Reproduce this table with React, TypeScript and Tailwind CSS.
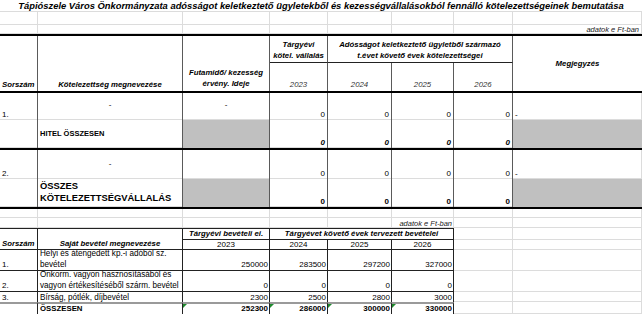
import React from "react";

const ROW = [
  "",
  "row-start-1",
  "row-start-2",
  "row-start-3",
  "row-start-4",
  "row-start-5",
  "row-start-6",
  "row-start-7",
  "row-start-8",
  "row-start-9",
  "row-start-10",
  "row-start-11",
  "row-start-12",
  "row-start-13",
  "row-start-14",
  "row-start-15",
  "row-start-16",
  "row-start-17",
  "row-start-18",
  "row-start-19",
  "row-start-20",
  "row-start-21",
];
const COL = [
  "",
  "col-start-1",
  "col-start-2",
  "col-start-3",
  "col-start-4",
  "col-start-5",
  "col-start-6",
  "col-start-7",
  "col-start-8",
];
const BLACK_ROWS = [4, 7, 10, 13];

function Cell({ className, children }: { className: string; children?: React.ReactNode }) {
  return <div className={"relative flex overflow-hidden " + className}>{children}</div>;
}

function Tri() {
  return (
    <span className="absolute left-0 top-0 h-0 w-0 border-t-[4px] border-r-[4px] border-t-[#1f8a2e] border-r-transparent" />
  );
}

export default function App() {
  const bg: React.ReactNode[] = [];
  for (let r = 1; r <= 21; r++) {
    if (BLACK_ROWS.includes(r)) continue;
    for (let c = 1; c <= 8; c++) {
      bg.push(
        <div key={`g-${r}-${c}`} className={`${ROW[r]} ${COL[c]} border-r border-b border-[#dcdcdc]`} />
      );
    }
  }

  const upperNumCols = [4, 5, 6, 7];

  return (
    <div className="w-[642px] h-[314px] overflow-hidden bg-white text-black font-['Liberation_Sans',Arial,sans-serif]">
      <div className="grid grid-cols-[38px_145px_87px_58px_64px_62px_59px_129px] grid-rows-[12px_13px_9px_2px_27px_28px_2px_27px_28px_2px_29px_28px_2px_9px_10px_12px_10px_21px_21px_10px_12px]">
        {bg}

        {/* Title */}
        <Cell className="row-start-1 col-start-1 col-span-8 bg-white border-b border-[#dcdcdc] items-center justify-center">
          <span className="text-[9.4px] font-bold italic leading-none whitespace-nowrap">
            Tápiószele Város Önkormányzata adósságot keletkeztető ügyletekből és kezességvállalásokból fennálló kötelezettségeinek bemutatása
          </span>
        </Cell>

        <Cell className="row-start-3 col-start-8 items-end justify-end pr-[3px]">
          <span className="text-[7.5px] italic leading-[9px] text-[#222]">adatok e Ft-ban</span>
        </Cell>

        <div className="row-start-4 col-start-1 col-span-8 bg-black" />

        {/* Header */}
        <Cell className="row-start-5 row-span-2 col-start-1 bg-white border-r border-[#5a5a5a] items-end pl-[2px] pb-[1px]">
          <span className="text-[7.8px] font-bold italic leading-[10px]">Sorszám</span>
        </Cell>
        <Cell className="row-start-5 row-span-2 col-start-2 bg-white border-r border-[#5a5a5a] items-end justify-center pb-[1px]">
          <span className="text-[7.8px] font-bold italic leading-[10px]">Kötelezettség megnevezése</span>
        </Cell>
        <Cell className="row-start-5 row-span-2 col-start-3 bg-white border-r border-[#5a5a5a] items-end justify-center pb-[2px]">
          <span className="text-[7.8px] font-bold italic leading-[11px] text-center">
            Futamidő/ kezesség
            <br />
            érvény. Ideje
          </span>
        </Cell>
        <Cell className="row-start-5 col-start-4 bg-white border-r border-b border-r-[#5a5a5a] border-b-[#222] items-end justify-center pb-[1px]">
          <span className="text-[7.8px] font-bold italic leading-[10.5px] text-center whitespace-nowrap">
            Tárgyévi
            <br />
            kötel. vállalás
          </span>
        </Cell>
        <Cell className="row-start-5 col-start-5 col-span-3 bg-white border-r border-b border-r-[#5a5a5a] border-b-[#222] items-end justify-center pb-[1px]">
          <span className="text-[7.8px] font-bold italic leading-[10.5px] text-center whitespace-nowrap">
            Adósságot keletkeztető ügyletből származó
            <br />
            t.évet követő évek kötelezettségei
          </span>
        </Cell>
        {[
          ["col-start-4", "2023"],
          ["col-start-5", "2024"],
          ["col-start-6", "2025"],
          ["col-start-7", "2026"],
        ].map(([c, y]) => (
          <Cell key={y} className={`row-start-6 ${c} bg-white border-r border-[#5a5a5a] items-end justify-center pb-[1px]`}>
            <span className="text-[7.8px] italic leading-[10px] text-[#333]">{y}</span>
          </Cell>
        ))}
        <Cell className="row-start-5 row-span-2 col-start-8 bg-white items-center justify-center">
          <span className="text-[7.8px] font-bold italic leading-[10px]">Megjegyzés</span>
        </Cell>

        <div className="row-start-7 col-start-1 col-span-8 bg-black" />

        {/* Row 1. */}
        <Cell className="row-start-8 col-start-1 border-r border-r-[#5a5a5a] items-end pl-[2px]">
          <span className="text-[8px] leading-[10px]">1.</span>
        </Cell>
        <Cell className="row-start-8 col-start-2 border-r border-r-[#5a5a5a] items-center justify-center pb-[3px]">
          <span className="text-[8px] leading-[10px]">-</span>
        </Cell>
        <Cell className="row-start-8 col-start-3 border-r border-r-[#5a5a5a] items-center justify-center pb-[3px]">
          <span className="text-[8px] leading-[10px]">-</span>
        </Cell>
        {upperNumCols.map((c) => (
          <Cell key={`r8-${c}`} className={`row-start-8 ${COL[c]} border-r border-r-[#5a5a5a] items-end justify-end pr-[2px]`}>
            <span className="text-[8px] leading-[10px]">0</span>
          </Cell>
        ))}
        <Cell className="row-start-8 col-start-8 items-end pl-[2px]">
          <span className="text-[8px] leading-[10px]">-</span>
        </Cell>

        {/* HITEL ÖSSZESEN */}
        <Cell className="row-start-9 col-start-1 border-r border-r-[#5a5a5a]" />
        <Cell className="row-start-9 col-start-2 border-r border-r-[#5a5a5a] items-center pl-[2px]">
          <span className="text-[7.5px] font-bold leading-[10px]">HITEL ÖSSZESEN</span>
        </Cell>
        <Cell className="row-start-9 col-start-3 bg-[#c0c0c0] border-r border-r-[#5a5a5a]" />
        {upperNumCols.map((c) => (
          <Cell key={`r9-${c}`} className={`row-start-9 ${COL[c]} border-r border-r-[#5a5a5a] items-end justify-end pr-[2px]`}>
            <span className="text-[8px] font-bold italic leading-[10px]">0</span>
          </Cell>
        ))}
        <Cell className="row-start-9 col-start-8 bg-[#c0c0c0]" />

        <div className="row-start-10 col-start-1 col-span-8 bg-black" />

        {/* Row 2. */}
        <Cell className="row-start-11 col-start-1 border-r border-r-[#5a5a5a] items-end pl-[2px]">
          <span className="text-[8px] leading-[10px]">2.</span>
        </Cell>
        <Cell className="row-start-11 col-start-2 border-r border-r-[#5a5a5a] items-center justify-center pb-[2px]">
          <span className="text-[8px] leading-[10px]">-</span>
        </Cell>
        <Cell className="row-start-11 col-start-3 border-r border-r-[#5a5a5a]" />
        {upperNumCols.map((c) => (
          <Cell key={`r11-${c}`} className={`row-start-11 ${COL[c]} border-r border-r-[#5a5a5a] items-end justify-end pr-[2px]`}>
            <span className="text-[8px] leading-[10px]">0</span>
          </Cell>
        ))}
        <Cell className="row-start-11 col-start-8 items-end pl-[2px]">
          <span className="text-[8px] leading-[10px]">-</span>
        </Cell>

        {/* ÖSSZES */}
        <Cell className="row-start-12 col-start-1 border-r border-r-[#5a5a5a]" />
        <Cell className="row-start-12 col-start-2 border-r border-r-[#5a5a5a] items-start pl-[2px] pt-[1px]">
          <span className="text-[9.4px] font-bold leading-[12px] whitespace-nowrap">
            ÖSSZES
            <br />
            KÖTELEZETTSÉGVÁLLALÁS
          </span>
        </Cell>
        <Cell className="row-start-12 col-start-3 bg-[#c0c0c0] border-r border-r-[#5a5a5a]" />
        {upperNumCols.map((c) => (
          <Cell key={`r12-${c}`} className={`row-start-12 ${COL[c]} border-r border-r-[#5a5a5a] items-end justify-end pr-[2px]`}>
            <span className="text-[8px] font-bold leading-[10px]">0</span>
          </Cell>
        ))}
        <Cell className="row-start-12 col-start-8 bg-[#c0c0c0]" />

        <div className="row-start-13 col-start-1 col-span-8 bg-black" />

        {/* Lower table */}
        <Cell className="row-start-15 col-start-6 items-end justify-end pr-[2px]">
          <span className="text-[7.5px] italic leading-[9px] text-[#222] whitespace-nowrap">adatok e Ft-ban</span>
        </Cell>

        <Cell className="row-start-16 row-span-2 col-start-1 bg-white border-t border-r border-b border-[#222] items-end pl-[2px]">
          <span className="text-[7.8px] font-bold italic leading-[10px]">Sorszám</span>
        </Cell>
        <Cell className="row-start-16 row-span-2 col-start-2 bg-white border-t border-r border-b border-[#222] items-end justify-center">
          <span className="text-[7.8px] font-bold italic leading-[10px]">Saját bevétel megnevezése</span>
        </Cell>
        <Cell className="row-start-16 col-start-3 bg-white border-t border-r border-b border-[#222] items-center justify-center">
          <span className="text-[7.8px] font-bold italic leading-[10px] whitespace-nowrap">Tárgyévi bevételi ei.</span>
        </Cell>
        <Cell className="row-start-16 col-start-4 col-span-3 bg-white border-t border-r border-b border-[#222] items-center justify-center">
          <span className="text-[7.8px] font-bold italic leading-[10px] whitespace-nowrap">
            Tárgyévet követő évek tervezett bevételei
          </span>
        </Cell>
        {[
          ["col-start-3", "2023"],
          ["col-start-4", "2024"],
          ["col-start-5", "2025"],
          ["col-start-6", "2026"],
        ].map(([c, y]) => (
          <Cell key={`ly-${y}`} className={`row-start-17 ${c} bg-white border-r border-b border-[#222] items-center justify-center`}>
            <span className="text-[8px] leading-[9px]">{y}</span>
          </Cell>
        ))}

        {[
          {
            r: "row-start-18",
            n: "1.",
            t: (
              <>
                Helyi és átengedett kp.-i adóból sz.
                <br />
                bevétel
              </>
            ),
            v: ["250000", "283500", "297200", "327000"],
          },
          {
            r: "row-start-19",
            n: "2.",
            t: (
              <>
                Önkorm. vagyon hasznosításából és
                <br />
                vagyon értékesítéséből szárm. bevétel
              </>
            ),
            v: ["0", "0", "0", "0"],
          },
        ].map((row) => (
          <React.Fragment key={row.n}>
            <Cell className={`${row.r} col-start-1 bg-white border-r border-b border-[#222] items-end pl-[2px]`}>
              <span className="text-[8px] leading-[10px]">{row.n}</span>
            </Cell>
            <Cell className={`${row.r} col-start-2 bg-white border-r border-b border-[#222] items-end pl-[2px]`}>
              <span className="text-[8.15px] leading-[10.5px] whitespace-nowrap">{row.t}</span>
            </Cell>
            {row.v.map((v, i) => (
              <Cell
                key={`${row.n}-${i}`}
                className={`${row.r} ${COL[i + 3]} bg-white border-r border-b border-[#222] items-end justify-end pr-[1px]`}
              >
                <span className="text-[8px] leading-[10px]">{v}</span>
              </Cell>
            ))}
          </React.Fragment>
        ))}

        {/* Row 3 */}
        <Cell className="row-start-20 col-start-1 bg-white border-r border-[#222] items-end pl-[2px]">
          <span className="text-[8px] leading-[9px]">3.</span>
        </Cell>
        <Cell className="row-start-20 col-start-2 bg-white border-r border-[#222] items-end pl-[2px]">
          <span className="text-[8.15px] leading-[9px] whitespace-nowrap">Bírság, pótlék, díjbevétel</span>
        </Cell>
        {["2300", "2500", "2800", "3000"].map((v, i) => (
          <Cell key={`r20-${i}`} className={`row-start-20 ${COL[i + 3]} bg-white border-r border-[#222] items-end justify-end pr-[1px]`}>
            <span className="text-[8px] leading-[9px]">{v}</span>
          </Cell>
        ))}

        {/* ÖSSZESEN */}
        <Cell className="row-start-21 col-start-1 bg-white border-t-2 border-r border-t-[#9a9a9a] border-r-[#222]" />
        <Cell className="row-start-21 col-start-2 bg-white border-t-2 border-r border-t-[#9a9a9a] border-r-[#222] items-center pl-[2px]">
          <span className="text-[7.8px] font-bold leading-[10px]">ÖSSZESEN</span>
        </Cell>
        {["252300", "286000", "300000", "330000"].map((v, i) => (
          <Cell
            key={`r21-${i}`}
            className={`row-start-21 ${COL[i + 3]} bg-white border-t-2 border-r border-t-[#9a9a9a] border-r-[#222] items-center justify-end pr-[1px]`}
          >
            <Tri />
            <span className="text-[8px] font-bold leading-[10px]">{v}</span>
          </Cell>
        ))}
      </div>
    </div>
  );
}
